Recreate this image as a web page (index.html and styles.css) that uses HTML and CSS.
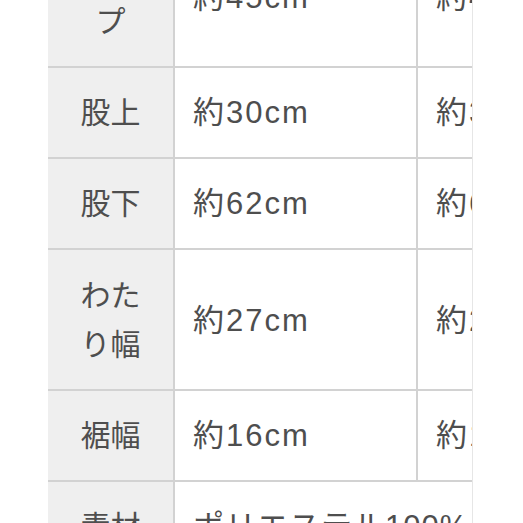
FILE: index.html
```html
<!DOCTYPE html>
<html lang="ja">
<head>
<meta charset="utf-8">
<link rel="stylesheet" href="styles.css">
</head>
<body>
<div class="frame">
  <table class="size">
    <colgroup>
      <col class="c-label">
      <col class="c-val">
      <col class="c-val2">
    </colgroup>
    <tr class="two">
      <th>ヒッ<br>プ</th>
      <td>約45cm</td>
      <td>約47cm</td>
    </tr>
    <tr>
      <th>股上</th>
      <td>約30cm</td>
      <td>約31cm</td>
    </tr>
    <tr>
      <th>股下</th>
      <td>約62cm</td>
      <td>約63cm</td>
    </tr>
    <tr class="two">
      <th>わた<br>り幅</th>
      <td>約27cm</td>
      <td>約28cm</td>
    </tr>
    <tr>
      <th>裾幅</th>
      <td>約16cm</td>
      <td>約17cm</td>
    </tr>
    <tr class="last">
      <th>素材</th>
      <td colspan="2">ポリエステル100%</td>
    </tr>
  </table>
</div>
</body>
</html>
```
FILE: styles.css
```css
html, body {
  margin: 0;
  padding: 0;
  background: #ffffff;
}
body {
  width: 523px;
  height: 523px;
  overflow: hidden;
}
.frame {
  margin-left: 48px;
  width: 424px;
  overflow: hidden;
  border-right: 1px solid #e6e6e6;
}
.size {
  margin-top: -75px;
  border-collapse: collapse;
  table-layout: fixed;
  width: 520px;
  font-family: "Liberation Sans", "Noto Sans CJK JP", sans-serif;
  font-size: 30px;
  color: #4e4e4e;
}
.c-label { width: 126px; }
.c-val { width: 243px; }
.c-val2 { width: 151px; }
.size th,
.size td {
  border: 2px solid #d2d2d2;
  line-height: 49px;
  padding: 20px 0;
  white-space: nowrap;
  overflow: hidden;
}
.size .two th,
.size .two td {
  padding: 21px 0 20px;
}
.size th {
  background: #efefef;
  font-weight: normal;
  text-align: center;
  border-left: none;
}
.size td {
  text-align: left;
  font-size: 31px;
  letter-spacing: 2px;
}
.size .two td,
.size td {
  padding-left: 18px;
}
.size .last td {
  letter-spacing: 1px;
}
```
